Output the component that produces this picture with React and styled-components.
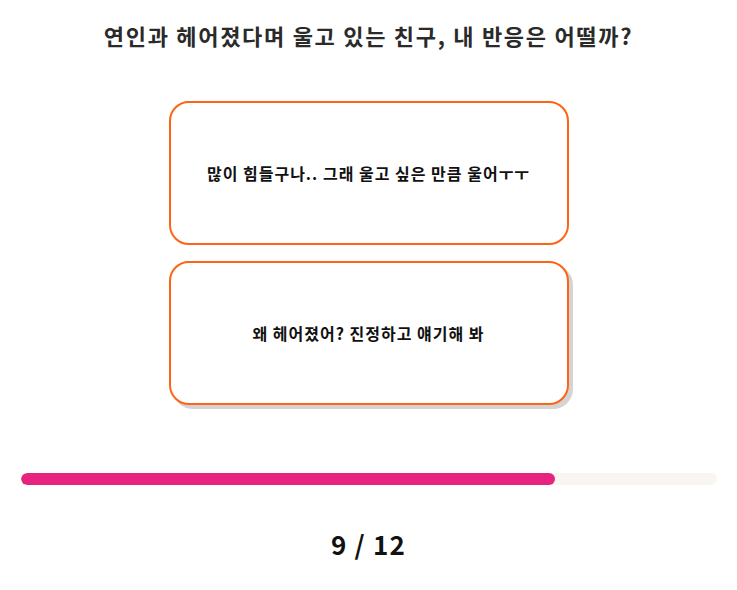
import React from "react";
import styled, { createGlobalStyle } from "styled-components";

const GlobalStyle = createGlobalStyle`
  body {
    margin: 0;
    background: #ffffff;
    font-family: "Noto Sans CJK KR", "Noto Sans", sans-serif;
    color: #222222;
  }
`;

const Page = styled.div`
  width: 737px;
  display: flex;
  flex-direction: column;
  align-items: center;
`;

const Question = styled.h2`
  margin: 20px 0 0;
  font-size: 22px;
  font-weight: 700;
  line-height: 30px;
  letter-spacing: 1.7px;
  color: #2a2a2a;
`;

const Choices = styled.div`
  display: flex;
  flex-direction: column;
  gap: 16px;
  margin-top: 51px;
`;

const Choice = styled.button`
  width: 400px;
  height: 144px;
  border: 2px solid #ff6414;
  border-radius: 20px;
  background: #ffffff;
  font-family: inherit;
  font-size: 16px;
  font-weight: 700;
  letter-spacing: 1px;
  color: #111111;
  cursor: pointer;
  box-shadow: ${(p) => (p.$raised ? "4px 4px 0 #d4d4d4" : "none")};
`;

const Track = styled.div`
  width: 696px;
  height: 12px;
  margin-top: 68px;
  border-radius: 6px;
  background: #f9f6f2;
  overflow: hidden;
`;

const Fill = styled.div`
  height: 100%;
  border-radius: 6px;
  background: #e6237f;
`;

const Counter = styled.div`
  margin-top: 40px;
  font-size: 26px;
  font-weight: 700;
  letter-spacing: 1.2px;
  color: #111111;
`;

const choices = [
  { id: 1, text: "많이 힘들구나.. 그래 울고 싶은 만큼 울어ㅜㅜ" },
  { id: 2, text: "왜 헤어졌어? 진정하고 얘기해 봐", raised: true },
];

export default function App() {
  return (
    <>
      <GlobalStyle />
      <Page>
        <Question>연인과 헤어졌다며 울고 있는 친구, 내 반응은 어떨까?</Question>
        <Choices>
          {choices.map((c) => (
            <Choice key={c.id} $raised={c.raised}>
              {c.text}
            </Choice>
          ))}
        </Choices>
        <Track>
          <Fill style={{ width: `${(534 / 696) * 100}%` }} />
        </Track>
        <Counter>9 / 12</Counter>
      </Page>
    </>
  );
}
